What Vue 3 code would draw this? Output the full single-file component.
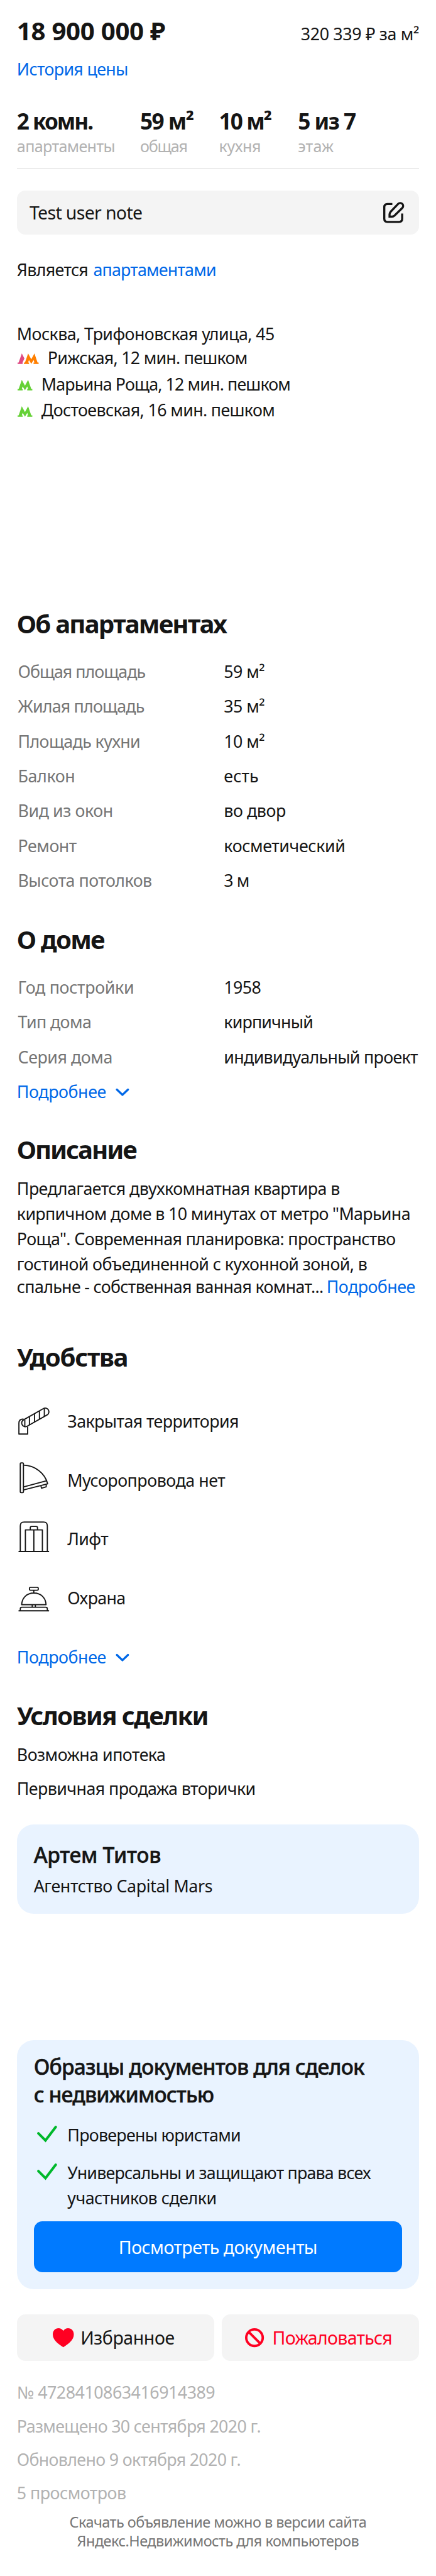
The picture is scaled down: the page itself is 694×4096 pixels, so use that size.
<script setup>
// v-fit spreads a line of text to its designed width, given in layout units (1/100 rem)
const vFit = {
  mounted(el, { value }) {
    const rem = parseFloat(getComputedStyle(document.documentElement).fontSize)
    const natural = el.getBoundingClientRect().width
    const gaps = el.textContent.trim().length - 1
    el.style.letterSpacing = ((value * rem) / 100 - natural) / gaps + 'px'
  }
}

const stats = [
  { value: '2 комн.', vw: 146, label: 'апартаменты', lw: 187 },
  { value: '59 м²', vw: 103, label: 'общая', lw: 91 },
  { value: '10 м²', vw: 101, label: 'кухня', lw: 80 },
  { value: '5 из 7', vw: 111, label: 'этаж', lw: 68 }
]

const metro = [
  { name: 'Рижская, 12 мин. пешком', w: 380, double: true },
  { name: 'Марьина Роща, 12 мин. пешком', w: 474 },
  { name: 'Достоевская, 16 мин. пешком', w: 444 }
]

const flat = [
  { k: 'Общая площадь', kw: 243, v: '59 м²', vw: 78 },
  { k: 'Жилая площадь', kw: 241, v: '35 м²', vw: 78 },
  { k: 'Площадь кухни', kw: 233, v: '10 м²', vw: 78 },
  { k: 'Балкон', kw: 109, v: 'есть', vw: 66 },
  { k: 'Вид из окон', kw: 181, v: 'во двор', vw: 118 },
  { k: 'Ремонт', kw: 112, v: 'косметический', vw: 231 },
  { k: 'Высота потолков', kw: 255, v: '3 м', vw: 49 }
]

const house = [
  { k: 'Год постройки', kw: 221, v: '1958', vw: 71 },
  { k: 'Тип дома', kw: 140, v: 'кирпичный', vw: 170 },
  { k: 'Серия дома', kw: 180, v: 'индивидуальный проект', vw: 369 }
]

const description = [
  { t: 'Предлагается двухкомнатная квартира в', w: 614 },
  { t: 'кирпичном доме в 10 минутах от метро "Марьина', w: 748 },
  { t: 'Роща". Современная планировка: пространство', w: 720 },
  { t: 'гостиной объединенной с кухонной зоной, в', w: 666 }
]

const meta = [
  { t: '№ 4728410863416914389', w: 377 },
  { t: 'Размещено 30 сентября 2020 г.', w: 464 },
  { t: 'Обновлено 9 октября 2020 г.', w: 426 },
  { t: '5 просмотров', w: 208 }
]
</script>

<template>
  <main class="page">
    <header class="price">
      <h1><span v-fit="282">18 900 000 ₽</span></h1>
      <span v-fit="225">320 339 ₽ за м²</span>
    </header>
    <p class="line history"><a v-fit="212">История цены</a></p>

    <section class="stats">
      <div v-for="s in stats" :key="s.label" class="stat">
        <b><span v-fit="s.vw">{{ s.value }}</span></b>
        <small><span v-fit="s.lw">{{ s.label }}</span></small>
      </div>
    </section>

    <div class="note">
      <span v-fit="215">Test user note</span>
      <svg class="edit" viewBox="0 0 40 40">
        <path d="M17.3 4H8Q2 4 2 10V32Q2 38 8 38H30Q36 38 36 32V22" />
        <path d="M12 28V23.6Q12 21 14 18.8L28.4 3.8A5.5 5.5 0 0 1 36.2 11.6L21.2 26.2Q19 28 16.4 28Z" />
      </svg>
    </div>

    <p class="line apart"><span v-fit="136">Является</span><a v-fit="234">апартаментами</a></p>

    <section class="address">
      <p class="line"><span v-fit="490">Москва, Трифоновская улица, 45</span></p>
      <p v-for="m in metro" :key="m.name" class="station">
        <svg v-if="m.double" class="metro wide" viewBox="0 0 40 20">
          <path class="pink" d="M0 20V17.3H2L8 0L13 9.5L9.5 17V20Z" />
          <path class="orange" transform="translate(12)" d="M0 20V17.3H2L8 0L14 11L20 0L26 17.3H28V20H18.3V17.3H20L18.4 12.5L14 19.6L9.6 12.5L8 17.3H9.7V20Z" />
        </svg>
        <svg v-else class="metro" viewBox="0 0 28 20">
          <path class="green" d="M0 20V17.3H2L8 0L14 11L20 0L26 17.3H28V20H18.3V17.3H20L18.4 12.5L14 19.6L9.6 12.5L8 17.3H9.7V20Z" />
        </svg>
        <span v-fit="m.w">{{ m.name }}</span>
      </p>
    </section>

    <h2 class="h-flat"><span v-fit="400">Об апартаментах</span></h2>
    <dl class="table">
      <div v-for="r in flat" :key="r.k">
        <dt><span v-fit="r.kw">{{ r.k }}</span></dt>
        <dd><span v-fit="r.vw">{{ r.v }}</span></dd>
      </div>
    </dl>

    <h2 class="h-house"><span v-fit="168">О доме</span></h2>
    <dl class="table">
      <div v-for="r in house" :key="r.k">
        <dt><span v-fit="r.kw">{{ r.k }}</span></dt>
        <dd><span v-fit="r.vw">{{ r.v }}</span></dd>
      </div>
    </dl>
    <p class="line more m1">
      <a v-fit="170">Подробнее</a>
      <svg class="chevron" viewBox="0 0 26 16"><path d="M2.5 3L13 13L23.5 3" /></svg>
    </p>

    <h2 class="h-desc"><span v-fit="229">Описание</span></h2>
    <div class="desc">
      <p v-for="d in description" :key="d.t"><span v-fit="d.w">{{ d.t }}</span></p>
      <p class="last"><span v-fit="583">спальне - собственная ванная комнат...</span><a v-fit="169">Подробнее</a></p>
    </div>

    <h2 class="h-amen"><span v-fit="212">Удобства</span></h2>
    <ul class="amenities">
      <li>
        <svg viewBox="0 0 64 64">
          <path d="M12.5 31.6H11Q3.7 31.6 3.7 39.5V60H20.3V46" />
          <rect x="9" y="32" width="57.3" height="14" rx="7" transform="rotate(-29.5 16 39)" />
          <path d="M14.9 33V46.2M23.7 27.4V42.6M33.3 22V37M42.7 16.7V31.8M52 11.6V26.3" />
        </svg>
        <span v-fit="326">Закрытая территория</span>
      </li>
      <li>
        <svg viewBox="0 0 64 64">
          <rect x="6.3" y="3.7" width="6" height="56.4" rx="1.5" />
          <path d="M12.3 8C34 8.5 53 23 58.3 43.3L12.3 55M12.3 49.3L55.7 37.7M45.5 47.3L46.6 51.7L55.6 49.2V45" />
        </svg>
        <span v-fit="300">Мусоропровода нет</span>
      </li>
      <li>
        <svg viewBox="0 0 64 64">
          <path d="M3 59.7H61M6.3 59V11Q6.3 3.7 13.6 3.7H50.4Q57.7 3.7 57.7 11V59M16 59V18.7H48.3V59M32.1 18.7V59M25.3 18.7V14.5Q25.3 12 27.8 12H36.5Q39 12 39 14.5V18.7" />
        </svg>
        <span v-fit="78">Лифт</span>
      </li>
      <li>
        <svg viewBox="0 0 64 64">
          <rect x="23.7" y="15.3" width="16.8" height="5.7" rx="2.2" />
          <path d="M32 21V26.3M8.9 48.3Q9.4 39 15.5 32.6Q22.3 26.3 32.1 26.3Q41.9 26.3 48.7 32.6Q54.8 39 55.3 48.3ZM29 48.3V53.3M35 48.3V53.3M6.3 59V56.3Q6.3 53.3 9.3 53.3H54.7Q57.7 53.3 57.7 56.3V59M3 60H61" />
        </svg>
        <span v-fit="111">Охрана</span>
      </li>
    </ul>
    <p class="line more m2">
      <a v-fit="170">Подробнее</a>
      <svg class="chevron" viewBox="0 0 26 16"><path d="M2.5 3L13 13L23.5 3" /></svg>
    </p>

    <h2 class="h-deal"><span v-fit="365">Условия сделки</span></h2>
    <ul class="deal">
      <li><span v-fit="283">Возможна ипотека</span></li>
      <li><span v-fit="454">Первичная продажа вторички</span></li>
    </ul>

    <section class="card agent">
      <h3><span v-fit="242">Артем Титов</span></h3>
      <p><span v-fit="340">Агентство Capital Mars</span></p>
    </section>

    <section class="card docs">
      <h3><span v-fit="629">Образцы документов для сделок</span><br /><span v-fit="343">с недвижимостью</span></h3>
      <ul>
        <li>
          <svg class="check" viewBox="0 0 38 31"><path d="M2.5 14.5L16 28L35.5 2.5" /></svg>
          <div><p><span v-fit="330">Проверены юристами</span></p></div>
        </li>
        <li>
          <svg class="check" viewBox="0 0 38 31"><path d="M2.5 14.5L16 28L35.5 2.5" /></svg>
          <div>
            <p><span v-fit="577">Универсальны и защищают права всех</span></p>
            <p><span v-fit="284">участников сделки</span></p>
          </div>
        </li>
      </ul>
      <button class="primary"><span v-fit="378">Посмотреть документы</span></button>
    </section>

    <div class="actions">
      <button class="fav">
        <svg class="heart" viewBox="0 0 40 36">
          <path d="M20 5C17.5 1.5 14.5 0 11 0C4.5 0 0 5 0 11.5C0 22 9 29 20 36C31 29 40 22 40 11.5C40 5 35.500 0 29 0C25.500 0 22.500 1.500 20 5Z" />
        </svg>
        <span v-fit="179">Избранное</span>
      </button>
      <button class="report">
        <svg class="ban" viewBox="0 0 36 36"><circle cx="18" cy="18" r="15.700" /><path d="M7 7L29 29" /></svg>
        <span v-fit="228">Пожаловаться</span>
      </button>
    </div>

    <div class="meta">
      <p v-for="m in meta" :key="m.t"><span v-fit="m.w">{{ m.t }}</span></p>
    </div>

    <footer>
      <p><span v-fit="565">Скачать объявление можно в версии сайта</span></p>
      <p><span v-fit="536">Яндекс.Недвижимость для компьютеров</span></p>
    </footer>
  </main>
</template>

<style>
html {
  font-size: 83.79px;
  background: #fff;
}
body {
  margin: 0;
}
</style>

<style scoped>
.page {
  box-sizing: border-box;
  width: 8.28rem;
  height: 48.88rem;
  padding: 0.309rem 0.32rem 0;
  overflow: hidden;
  background: #fff;
  color: #151515;
  font-family: "Noto Sans", "Open Sans", sans-serif;
  font-size: 0.32rem;
}
h1, h2, h3, p, ul, dl, dd {
  margin: 0;
  padding: 0;
  white-space: nowrap;
}
ul {
  list-style: none;
}
a {
  color: #0068e8;
}
svg {
  display: block;
  flex: none;
  fill: none;
  overflow: visible;
}
button {
  display: flex;
  align-items: center;
  box-sizing: border-box;
  margin: 0;
  padding: 0;
  border: 0;
  font: inherit;
  white-space: nowrap;
}
.line {
  display: flex;
  line-height: 0.4rem;
}
h1, h2 {
  font-size: 0.48rem;
  font-weight: 700;
  line-height: 0.56rem;
}
h2 {
  box-sizing: border-box;
  height: 0.56rem;
  padding-top: 0.012rem;
}
.price {
  display: flex;
  justify-content: space-between;
  align-items: baseline;
  height: 0.56rem;
  line-height: 0.56rem;
}
.history {
  margin-top: 0.24rem;
}

.stats {
  display: flex;
  box-sizing: border-box;
  height: 1.173rem;
  margin-top: 0.528rem;
  border-bottom: 1px solid #d3d3d3;
}
.stat {
  width: 1.5rem;
}
.stat:first-child {
  width: 2.34rem;
}
.stat b,
.stat small {
  display: block;
}
.stat b {
  font-size: 0.42rem;
  line-height: 0.52rem;
}
.stat small {
  margin-top: 0.017rem;
  color: #b2b2b2;
  font-size: 0.3rem;
  line-height: 0.4rem;
}

.note {
  display: flex;
  justify-content: space-between;
  align-items: center;
  box-sizing: border-box;
  height: 0.84rem;
  margin-top: 0.401rem;
  padding: 0 0.28rem 0 0.24rem;
  border-radius: 0.16rem;
  background: #f4f4f4;
  font-size: 0.34rem;
}
.edit {
  width: 0.4rem;
  height: 0.4rem;
  stroke: #151515;
  stroke-width: 4;
}

.apart {
  gap: 0.1rem;
  margin-top: 0.466rem;
}
.address {
  margin-top: 0.82rem;
}
.station {
  display: flex;
  line-height: 0.5rem;
}
.metro {
  width: 0.28rem;
  height: 0.2rem;
  margin: 0.17rem 0.165rem 0 0.02rem;
}
.metro.wide {
  width: 0.4rem;
}
.pink {
  fill: #de4a83;
}
.orange {
  fill: #ff7f00;
}
.green {
  fill: #65d136;
}

.h-flat {
  margin-top: 3.518rem;
}
.h-house {
  margin-top: 0.512rem;
}
.table {
  margin-top: 0.3rem;
}
.table > div {
  display: flex;
  line-height: 0.66rem;
}
.table dt {
  width: 3.913rem;
  padding-left: 0.02rem;
  color: #757575;
}
.more {
  gap: 0.18rem;
}
.m1 {
  margin-top: 0.127rem;
}
.m2 {
  margin-top: 0.401rem;
}
.chevron {
  width: 0.26rem;
  height: 0.16rem;
  margin-top: 0.13rem;
  stroke: #0068e8;
  stroke-width: 4;
  stroke-linecap: round;
  stroke-linejoin: round;
}

.h-desc {
  margin-top: 0.621rem;
}
.desc {
  margin-top: 0.22rem;
  line-height: 0.48rem;
}
.desc .last {
  display: flex;
  gap: 0.06rem;
  margin-top: -0.021rem;
  line-height: 0.4rem;
}

.h-amen {
  margin-top: 0.854rem;
}
.amenities {
  margin-top: 0.343rem;
}
.amenities li {
  display: flex;
  align-items: center;
  gap: 0.32rem;
  height: 1.12rem;
}
.amenities svg {
  width: 0.64rem;
  height: 0.64rem;
  stroke: #151515;
  stroke-width: 2.2;
  stroke-linejoin: round;
}
.amenities span {
  padding-top: 0.07rem;
}

.h-deal {
  margin-top: 0.62rem;
}
.deal {
  margin-top: 0.145rem;
  line-height: 0.64rem;
}

.card {
  box-sizing: border-box;
  padding: 0 0.32rem;
  border-radius: 0.32rem;
  background: #e9f3ff;
}
h3 {
  font-size: 0.4rem;
  font-weight: 500;
  line-height: 0.52rem;
  -webkit-text-stroke: 0.5px currentColor;
}
.agent {
  height: 1.7rem;
  margin-top: 0.364rem;
  padding-top: 0.325rem;
}
.agent p {
  margin-top: 0.131rem;
  line-height: 0.4rem;
}
.docs {
  height: 4.72rem;
  margin-top: 2.4rem;
  padding-top: 0.24rem;
}
.docs h3 {
  line-height: 0.525rem;
}
.docs ul {
  margin-top: 0.266rem;
  line-height: 0.48rem;
}
.docs li {
  display: flex;
  gap: 0.2rem;
  margin-bottom: 0.24rem;
}
.check {
  width: 0.38rem;
  height: 0.31rem;
  margin: 0.06rem 0 0 0.06rem;
  stroke: #00b82b;
  stroke-width: 4.8;
  stroke-linecap: round;
}
.primary {
  justify-content: center;
  width: 7rem;
  height: 0.96rem;
  margin-top: -0.036rem;
  border-radius: 0.16rem;
  background: #007aff;
  color: #fff;
  font-size: 0.34rem;
}

.actions {
  display: flex;
  gap: 0.14rem;
  margin-top: 0.48rem;
}
.actions button {
  flex: none;
  width: 3.75rem;
  height: 0.88rem;
  border-radius: 0.16rem;
  background: #f4f4f4;
  color: #151515;
  font-size: 0.34rem;
}
.actions .fav {
  gap: 0.13rem;
  padding-left: 0.68rem;
}
.actions .report {
  gap: 0.165rem;
  padding-left: 0.44rem;
  color: #ff0022;
}
.heart {
  width: 0.4rem;
  height: 0.36rem;
  fill: #ff0022;
}
.ban {
  width: 0.36rem;
  height: 0.36rem;
  stroke: #ff0022;
  stroke-width: 4.6;
}

.meta {
  margin-top: 0.28rem;
  color: #b2b2b2;
  line-height: 0.638rem;
}
footer {
  margin-top: 0.049rem;
  color: #757575;
  font-size: 0.28rem;
  line-height: 0.36rem;
  text-align: center;
}
</style>
